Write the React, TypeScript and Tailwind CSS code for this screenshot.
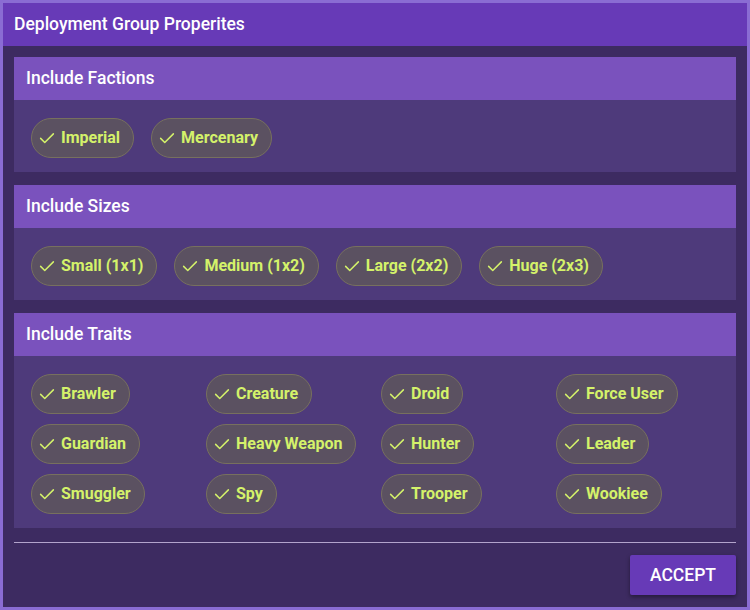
import React from "react";

const Check = () => (
  <svg width="18" height="18" viewBox="0 0 24 24" fill="none" stroke="#d4f26a" strokeWidth="2" strokeLinecap="round" strokeLinejoin="round">
    <path d="M3.5 12.5 L9 18 L20.5 6.5" />
  </svg>
);

const Chip = ({ label }: { label: string }) => (
  <div className="inline-flex h-[40px] items-center gap-[5px] rounded-full border border-[#77705e] bg-[#5b5161] pl-[6px] pr-[13px] text-[16px] font-bold text-[#d4f26a] whitespace-nowrap">
    <Check />
    <span>{label}</span>
  </div>
);

const Section = ({ title, children }: { title: string; children: React.ReactNode }) => (
  <div className="flex flex-col">
    <div className="flex h-[43px] items-center bg-[#7a52bd] pl-[12px] text-[17.5px] font-medium text-white">{title}</div>
    <div className="bg-[#4e3a7b] pb-[14px] pl-[17px] pt-[18px]">{children}</div>
  </div>
);

export default function App() {
  const traits = [
    "Brawler", "Creature", "Droid", "Force User",
    "Guardian", "Heavy Weapon", "Hunter", "Leader",
    "Smuggler", "Spy", "Trooper", "Wookiee",
  ];
  return (
    <div className="h-[610px] w-[750px] overflow-hidden bg-[#8a6cd3] p-[3px] pr-[3px]" style={{ fontFamily: "Roboto, 'Liberation Sans', sans-serif" }}>
      <div className="flex h-full w-full flex-col bg-[#3d2b61]">
        <div className="flex h-[43px] items-center bg-[#673ab7] pl-[11px] text-[17.5px] font-medium text-white">
          Deployment Group Properites
        </div>
        <div className="flex flex-col gap-[13px] px-[11px] pt-[11px]">
          <Section title="Include Factions">
            <div className="flex gap-[17px]">
              <Chip label="Imperial" />
              <Chip label="Mercenary" />
            </div>
          </Section>
          <Section title="Include Sizes">
            <div className="flex gap-[17px]">
              <Chip label="Small (1x1)" />
              <Chip label="Medium (1x2)" />
              <Chip label="Large (2x2)" />
              <Chip label="Huge (2x3)" />
            </div>
          </Section>
          <Section title="Include Traits">
            <div className="grid grid-cols-[175px_175px_175px_175px] gap-y-[10px]">
              {traits.map((t) => (
                <div key={t}>
                  <Chip label={t} />
                </div>
              ))}
            </div>
          </Section>
        </div>
        <div className="mx-[11px] mt-[14px] h-px bg-[#b3a4cc]" />
        <div className="flex justify-end px-[11px] pt-[12px]">
          <button className="h-[40px] w-[106px] rounded-[2px] bg-[#673ab7] text-[17.5px] font-medium text-white shadow-[0_2px_4px_rgba(0,0,0,0.4)]">
            ACCEPT
          </button>
        </div>
      </div>
    </div>
  );
}
